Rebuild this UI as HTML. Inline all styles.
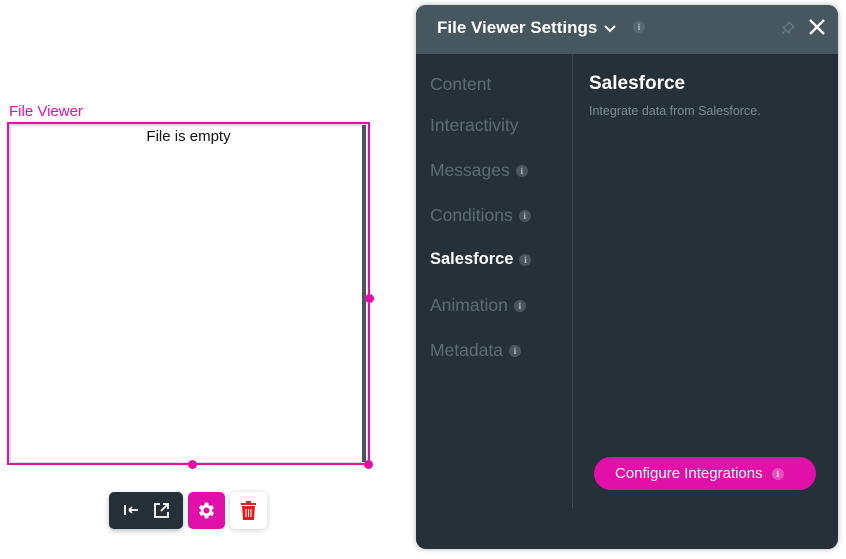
<!DOCTYPE html>
<html><head><style>
*{margin:0;padding:0;box-sizing:border-box}
body{width:846px;height:559px;background:#fff;font-family:"Liberation Sans",sans-serif;position:relative;overflow:hidden}
.a{position:absolute}
.info{display:inline-block;width:12px;height:12px;border-radius:50%;background:#4a555d;color:#b8c0c6;font-size:9px;line-height:12px;text-align:center;font-weight:bold;vertical-align:middle;margin-left:6px;font-family:"Liberation Serif",serif}
.nav{position:absolute;left:430px;font-size:17.5px;color:#5f6b73}
</style></head><body>
<div class="a" style="left:9px;top:103px;font-size:15px;color:#e010a8">File Viewer</div>
<div class="a" style="left:7px;top:122px;width:363px;height:343px;border:2px solid #e010a8"></div>
<div class="a" style="left:9px;top:124px;width:359px;height:339px;border:1px solid #ddd;border-top-width:2px;border-left-width:2px"></div>
<div class="a" style="left:362px;top:125px;width:4px;height:337px;background:#4a545b"></div>
<div class="a" style="left:9px;top:128px;width:359px;text-align:center;font-size:15px;color:#111">File is empty</div>
<div class="a" style="left:365px;top:294px;width:9px;height:9px;border-radius:50%;background:#e010a8"></div>
<div class="a" style="left:188px;top:460px;width:9px;height:9px;border-radius:50%;background:#e010a8"></div>
<div class="a" style="left:364px;top:460px;width:9px;height:9px;border-radius:50%;background:#e010a8"></div>

<div class="a" style="left:109px;top:492px;width:74px;height:37px;background:#263038;border-radius:5px;box-shadow:0 2px 6px rgba(0,0,0,.25)">
<svg class="a" style="left:14px;top:11px" width="16" height="14" viewBox="0 0 16 14"><path d="M2 2v10M6 7h9M6 7l3-3M6 7l3 3" stroke="#fff" stroke-width="1.8" fill="none"/></svg>
<svg class="a" style="left:44px;top:10px" width="17" height="17" viewBox="0 0 17 17"><path d="M7 2H2v13h13v-5M10 2h5v5M15 2L8 9" stroke="#fff" stroke-width="1.8" fill="none"/></svg>
</div>
<div class="a" style="left:188px;top:492px;width:37px;height:37px;background:#e010a8;border-radius:5px">
<svg class="a" style="left:8px;top:8px" width="21" height="21" viewBox="0 0 24 24"><path fill="#fff" d="M19.4 13a7.5 7.5 0 000-2l2.1-1.6-2-3.5-2.5 1a7 7 0 00-1.7-1L15 3h-4l-.4 2.7a7 7 0 00-1.7 1l-2.5-1-2 3.5L6.6 11a7.5 7.5 0 000 2l-2.1 1.6 2 3.5 2.5-1a7 7 0 001.7 1L11 21h4l.4-2.7a7 7 0 001.7-1l2.5 1 2-3.5zM13 15.5a3.5 3.5 0 110-7 3.5 3.5 0 010 7z" transform="translate(-1 0)"/></svg>
</div>
<div class="a" style="left:230px;top:492px;width:37px;height:37px;background:#fff;border-radius:5px;box-shadow:0 1px 6px rgba(0,0,0,.2)">
<svg class="a" style="left:11px;top:9px" width="15" height="19" viewBox="0 0 15 19"><path fill="#e02020" d="M5 0h5v2h5v2H0V2h5zM1 5h13l-1 14H2z"/><path d="M5 8v8M7.5 8v8M10 8v8" stroke="#fff" stroke-width="1"/></svg>
</div>

<div class="a" style="left:416px;top:5px;width:422px;height:544px;background:#263038;border-radius:10px;overflow:hidden;box-shadow:0 0 6px rgba(0,0,0,.3)">
<div class="a" style="left:0;top:0;width:422px;height:49px;background:#465760"></div>
<div class="a" style="left:21px;top:13px;font-size:17px;font-weight:bold;color:#fff;white-space:nowrap">File Viewer Settings
<svg width="12" height="8" viewBox="0 0 12 8" style="margin-left:2px"><path d="M1 1l5 5 5-5" stroke="#fff" stroke-width="2" fill="none"/></svg></div>
<span class="info a" style="left:217px;top:16px;margin:0;background:#5a6a73">i</span>
<svg class="a" style="left:365px;top:16px" width="14" height="14" viewBox="0 0 14 14"><path d="M8 1l5 5-2 1-3 3 0 2-6-6 2 0 3-3zM4 10l-3 3" stroke="#6a7a83" stroke-width="1.3" fill="none"/></svg>
<svg class="a" style="left:393px;top:14px" width="16" height="16" viewBox="0 0 16 16"><path d="M1 1l14 14M15 1L1 15" stroke="#fff" stroke-width="2.4"/></svg>
<div class="a" style="left:156px;top:49px;width:1px;height:454px;background:#3c474f"></div>
<div class="a" style="left:173px;top:68px;font-size:19px;font-weight:bold;color:#fff">Salesforce</div>
<div class="a" style="left:173px;top:99px;font-size:12.5px;color:#7d8a93">Integrate data from Salesforce.</div>
<div class="a" style="left:178px;top:452px;width:222px;height:33px;background:#e010a8;border-radius:17px;color:#fff;font-size:15px;line-height:33px;padding-left:21px">Configure Integrations<span class="info" style="background:#e84ec0;color:#fff;margin-left:9px">i</span></div>
</div>
<div class="nav" style="top:74px">Content</div>
<div class="nav" style="top:115px">Interactivity</div>
<div class="nav" style="top:160px">Messages<span class="info">i</span></div>
<div class="nav" style="top:205px">Conditions<span class="info">i</span></div>
<div class="nav" style="top:250px;color:#fff;font-weight:bold;font-size:16.5px">Salesforce<span class="info">i</span></div>
<div class="nav" style="top:295px">Animation<span class="info">i</span></div>
<div class="nav" style="top:340px">Metadata<span class="info">i</span></div>
</body></html>
